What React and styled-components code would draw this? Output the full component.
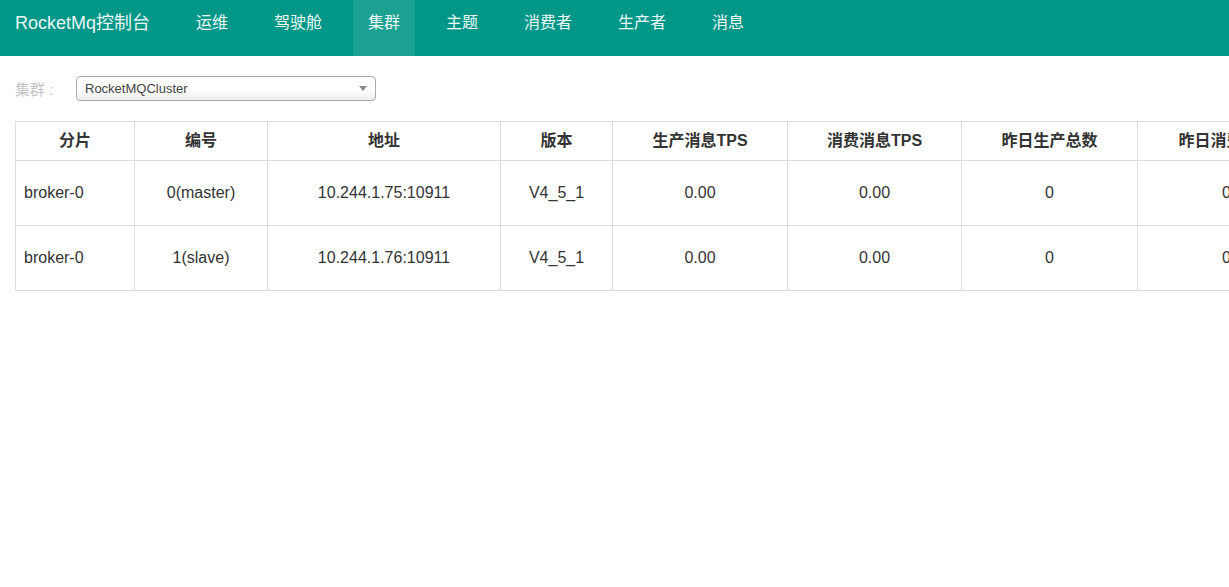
import styled, { createGlobalStyle } from 'styled-components';

const GlobalStyle = createGlobalStyle`
  html, body {
    margin: 0;
    padding: 0;
    overflow: hidden;
    background: #fff;
  }
  body {
    font-family: "Liberation Sans", "Noto Sans CJK SC", sans-serif;
    color: #333;
  }
`;

const NavBar = styled.header`
  display: flex;
  align-items: stretch;
  height: 56px;
  background: #009688;
  padding-left: 15px;
`;

const Brand = styled.div`
  font-size: 18px;
  line-height: 20px;
  padding-top: 13px;
  color: #e8f5f3;
  width: 166px;
`;

const NavList = styled.ul`
  display: flex;
  gap: 16px;
  margin: 0;
  padding: 0;
  list-style: none;
`;

const NavItem = styled.li`
  padding: 13px 15px 0;
  font-size: 16px;
  line-height: 20px;
  color: #eef8f6;
  background: ${(p) => (p.$active ? '#1ba192' : 'transparent')};
`;

const Content = styled.main`
  padding: 20px 15px;
`;

const FilterRow = styled.div`
  display: flex;
  align-items: center;
  height: 24px;
  margin-bottom: 21px;
`;

const Label = styled.span`
  font-size: 15px;
  color: #c4c4c4;
  width: 61px;
`;

const Select = styled.div`
  position: relative;
  box-sizing: border-box;
  width: 300px;
  height: 25px;
  border: 1px solid #aaa;
  border-radius: 4px;
  background: linear-gradient(to bottom, #fff 0%, #fff 50%, #eee 100%);
  font-size: 13px;
  line-height: 23px;
  color: #444;
  padding-left: 8px;
`;

const Arrow = styled.span`
  position: absolute;
  right: 8px;
  top: 9px;
  width: 0;
  height: 0;
  border-left: 4px solid transparent;
  border-right: 4px solid transparent;
  border-top: 5px solid #888;
`;

const Table = styled.table`
  border-collapse: collapse;
  table-layout: fixed;
  width: 1660px;
  font-size: 16px;
`;

const Th = styled.th`
  border: 1px solid #ddd;
  height: 34px;
  padding: 0 8px 4px;
  font-weight: bold;
  color: #333;
  text-align: center;
  white-space: nowrap;
  overflow: hidden;
`;

const Td = styled.td`
  border: 1px solid #ddd;
  height: 64px;
  padding: 0 8px;
  color: #333;
  text-align: ${(p) => (p.$left ? 'left' : 'center')};
  white-space: nowrap;
`;

const columns = [
  { title: '分片', width: 119 },
  { title: '编号', width: 133 },
  { title: '地址', width: 233 },
  { title: '版本', width: 112 },
  { title: '生产消息TPS', width: 175 },
  { title: '消费消息TPS', width: 174 },
  { title: '昨日生产总数', width: 176 },
  { title: '昨日消费总数', width: 178 },
  { title: '今天生产总数', width: 180 },
  { title: '今天消费总数', width: 180 },
];

const brokers = [
  ['broker-0', '0(master)', '10.244.1.75:10911', 'V4_5_1', '0.00', '0.00', '0', '0', '0', '0'],
  ['broker-0', '1(slave)', '10.244.1.76:10911', 'V4_5_1', '0.00', '0.00', '0', '0', '0', '0'],
];

const navItems = ['运维', '驾驶舱', '集群', '主题', '消费者', '生产者', '消息'];

const App = () => {
  return (
    <>
      <GlobalStyle />
      <NavBar>
        <Brand>RocketMq控制台</Brand>
        <NavList>
          {navItems.map((item) => (
            <NavItem key={item} $active={item === '集群'}>
              {item}
            </NavItem>
          ))}
        </NavList>
      </NavBar>
      <Content>
        <FilterRow>
          <Label>集群 :</Label>
          <Select>
            RocketMQCluster
            <Arrow />
          </Select>
        </FilterRow>
        <Table>
          <colgroup>
            {columns.map((c) => (
              <col key={c.title} style={{ width: c.width }} />
            ))}
          </colgroup>
          <thead>
            <tr>
              {columns.map((c) => (
                <Th key={c.title}>{c.title}</Th>
              ))}
            </tr>
          </thead>
          <tbody>
            {brokers.map((row, i) => (
              <tr key={i}>
                {row.map((cell, j) => (
                  <Td key={j} $left={j === 0}>
                    {cell}
                  </Td>
                ))}
              </tr>
            ))}
          </tbody>
        </Table>
      </Content>
    </>
  );
};

export default App;
